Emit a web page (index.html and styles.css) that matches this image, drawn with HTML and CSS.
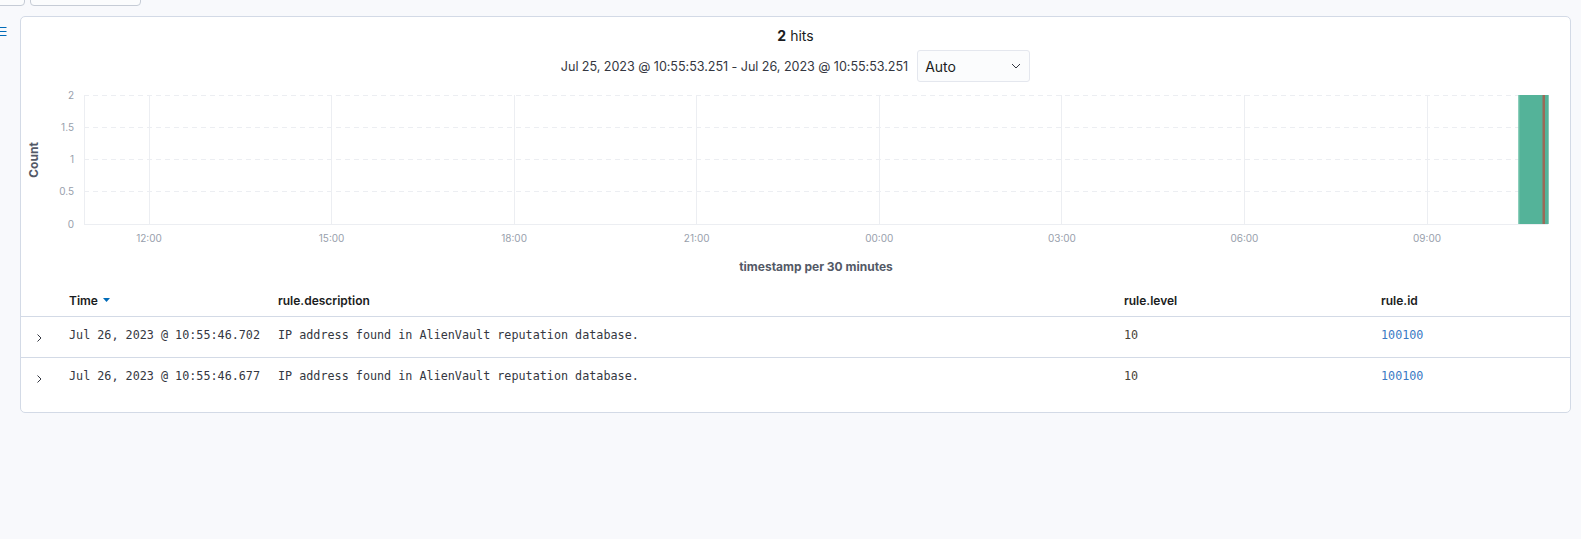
FILE: index.html
```html
<!DOCTYPE html>
<html>
<head>
<meta charset="utf-8">
<link rel="stylesheet" href="styles.css">
</head>
<body>
<div class="toolbar">
  <div class="tbtn tbtn-a"></div>
  <div class="tbtn tbtn-b"></div>
</div>
<div class="main">
  <div class="side">
    <svg class="menu-icon" width="7" height="10" viewBox="0 0 7 10"><path d="M0 1.5H6.5M0 5.5H6.5M0 9.5H6.5" stroke="#006bb8" stroke-width="1"/></svg>
  </div>
  <div class="card">
    <div class="hits"><b>2</b> hits</div>
    <div class="range">
      <span class="range-text">Jul 25, 2023 @ 10:55:53.251 - Jul 26, 2023 @ 10:55:53.251</span>
      <div class="select"><span>Auto</span><svg width="10" height="6" viewBox="0 0 10 6"><path d="M1 1L5 5L9 1" fill="none" stroke="#343741" stroke-width="1"/></svg></div>
    </div>
    <svg class="chart" width="1549" height="202" viewBox="0 0 1549 202">
      <g stroke="#eceef2" stroke-width="1">
        <line x1="128.5" y1="13" x2="128.5" y2="142"/>
        <line x1="310.5" y1="13" x2="310.5" y2="142"/>
        <line x1="493.5" y1="13" x2="493.5" y2="142"/>
        <line x1="675.5" y1="13" x2="675.5" y2="142"/>
        <line x1="858.5" y1="13" x2="858.5" y2="142"/>
        <line x1="1040.5" y1="13" x2="1040.5" y2="142"/>
        <line x1="1223.5" y1="13" x2="1223.5" y2="142"/>
        <line x1="1406.5" y1="13" x2="1406.5" y2="142"/>
        <line x1="63.5" y1="13" x2="63.5" y2="142"/>
      </g>
      <g stroke="#eceef2" stroke-width="1" stroke-dasharray="5 4">
        <line x1="63" y1="13.5" x2="1527" y2="13.5"/>
        <line x1="63" y1="45.5" x2="1527" y2="45.5"/>
        <line x1="63" y1="77.5" x2="1527" y2="77.5"/>
        <line x1="63" y1="109.5" x2="1527" y2="109.5"/>
      </g>
      <line x1="63" y1="142.5" x2="1527" y2="142.5" stroke="#eceef2" stroke-width="1"/>
      <rect x="1497.3" y="13" width="30.4" height="129" fill="#54b399"/>
      <rect x="1497.3" y="13" width="1" height="129" fill="#8fd0bd"/>
      <rect x="1521.5" y="13" width="2.5" height="129" fill="#9a6a58"/>
      <g class="ylab" text-anchor="end">
        <text x="53" y="16.5">2</text>
        <text x="53" y="48.5">1.5</text>
        <text x="53" y="80.5">1</text>
        <text x="53" y="112.5">0.5</text>
        <text x="53" y="145.5">0</text>
      </g>
      <g class="xlab" text-anchor="middle">
        <text x="128" y="159.5">12:00</text>
        <text x="310.6" y="159.5">15:00</text>
        <text x="493.1" y="159.5">18:00</text>
        <text x="675.7" y="159.5">21:00</text>
        <text x="858.3" y="159.5">00:00</text>
        <text x="1040.9" y="159.5">03:00</text>
        <text x="1223.4" y="159.5">06:00</text>
        <text x="1406" y="159.5">09:00</text>
      </g>
      <text class="axtitle" x="795" y="189" text-anchor="middle">timestamp per 30 minutes</text>
      <text class="axtitle" transform="translate(17 78) rotate(-90)" text-anchor="middle">Count</text>
    </svg>
    <div class="table">
      <div class="trow thead">
        <div></div>
        <div class="th">Time<svg class="sort" width="7" height="4" viewBox="0 0 7 4"><path d="M0 0H7L3.5 4Z" fill="#006bb8"/></svg></div>
        <div class="th">rule.description</div>
        <div class="th">rule.level</div>
        <div class="th">rule.id</div>
      </div>
      <div class="trow tbody">
        <div class="expand"><svg width="8" height="10" viewBox="0 0 8 10"><path d="M2.5 1.5L6 5L2.5 8.5" fill="none" stroke="#343741" stroke-width="1"/></svg></div>
        <div class="td">Jul 26, 2023 @ 10:55:46.702</div>
        <div class="td">IP address found in AlienVault reputation database.</div>
        <div class="td num">10</div>
        <div class="td link">100100</div>
      </div>
      <div class="trow tbody last">
        <div class="expand"><svg width="8" height="10" viewBox="0 0 8 10"><path d="M2.5 1.5L6 5L2.5 8.5" fill="none" stroke="#343741" stroke-width="1"/></svg></div>
        <div class="td">Jul 26, 2023 @ 10:55:46.677</div>
        <div class="td">IP address found in AlienVault reputation database.</div>
        <div class="td num">10</div>
        <div class="td link">100100</div>
      </div>
    </div>
  </div>
</div>
</body>
</html>
```

FILE: styles.css
```css
* { box-sizing: border-box; }
html, body { margin: 0; padding: 0; }
body {
  background: #f8f9fc;
  font-family: Inter, "Noto Sans", sans-serif;
  color: #343741;
  width: 1581px;
  height: 539px;
  overflow: hidden;
}
.toolbar {
  display: flex;
  gap: 5px;
  margin-top: -27px;
  height: 33px;
}
.tbtn {
  height: 33px;
  background: #fbfcfd;
  border: 1px solid #c6ccd6;
  border-radius: 4px;
}
.tbtn-a { width: 84px; margin-left: -59px; }
.tbtn-b { width: 111px; }
.main {
  display: flex;
  margin-top: 10px;
}
.side {
  width: 20px;
  flex: none;
}
.menu-icon {
  display: block;
  margin-top: 10px;
}
.card {
  width: 1551px;
  flex: none;
  background: #fff;
  border: 1px solid #d3dae6;
  border-radius: 5px;
  padding-bottom: 14px;
}
.hits {
  margin-top: 9px;
  text-align: center;
  font-size: 14px;
  line-height: 20px;
  color: #1a1c21;
}
.hits b { font-weight: 700; }
.range {
  margin-top: 4px;
  display: flex;
  justify-content: center;
  align-items: center;
  gap: 9px;
}
.range-text {
  font-size: 12.6px;
  color: #343741;
  letter-spacing: -0.05px;
}
.select {
  width: 113px;
  height: 32px;
  border: 1px solid #e4e7ee;
  background: #fbfcfd;
  border-radius: 3px;
  display: flex;
  align-items: center;
  justify-content: space-between;
  padding: 0 8px 0 7px;
  font-size: 14px;
  color: #1a1c21;
}
.chart {
  display: block;
}
.ylab text, .xlab text {
  font-family: Inter, sans-serif;
  font-size: 10px;
  fill: #98a0ac;
}
.axtitle {
  font-family: Inter, sans-serif;
  font-size: 12px;
  font-weight: 700;
  fill: #535966;
}
.trow {
  display: grid;
  grid-template-columns: 48px 209px 846px 257px 1fr;
  border-bottom: 1px solid #d3dae6;
}
.trow.last { border-bottom: none; }
.thead {
  height: 33px;
  align-items: center;
}
.th {
  font-size: 12px;
  font-weight: 600;
  color: #1a1c21;
  display: flex;
  align-items: center;
}
.sort { margin-left: 5px; }
.tbody {
  height: 41px;
  padding-top: 10px;
}
.tbody.last { height: 40px; }
.expand {
  padding-left: 14px;
  padding-top: 6px;
}
.expand svg { display: block; }
.td {
  font-family: "DejaVu Sans Mono", "Liberation Mono", monospace;
  font-size: 11.75px;
  line-height: 17px;
  color: #343741;
  white-space: nowrap;
}
.td.num { color: #4a4438; }
.td.link { color: #3b7ac4; }
```
